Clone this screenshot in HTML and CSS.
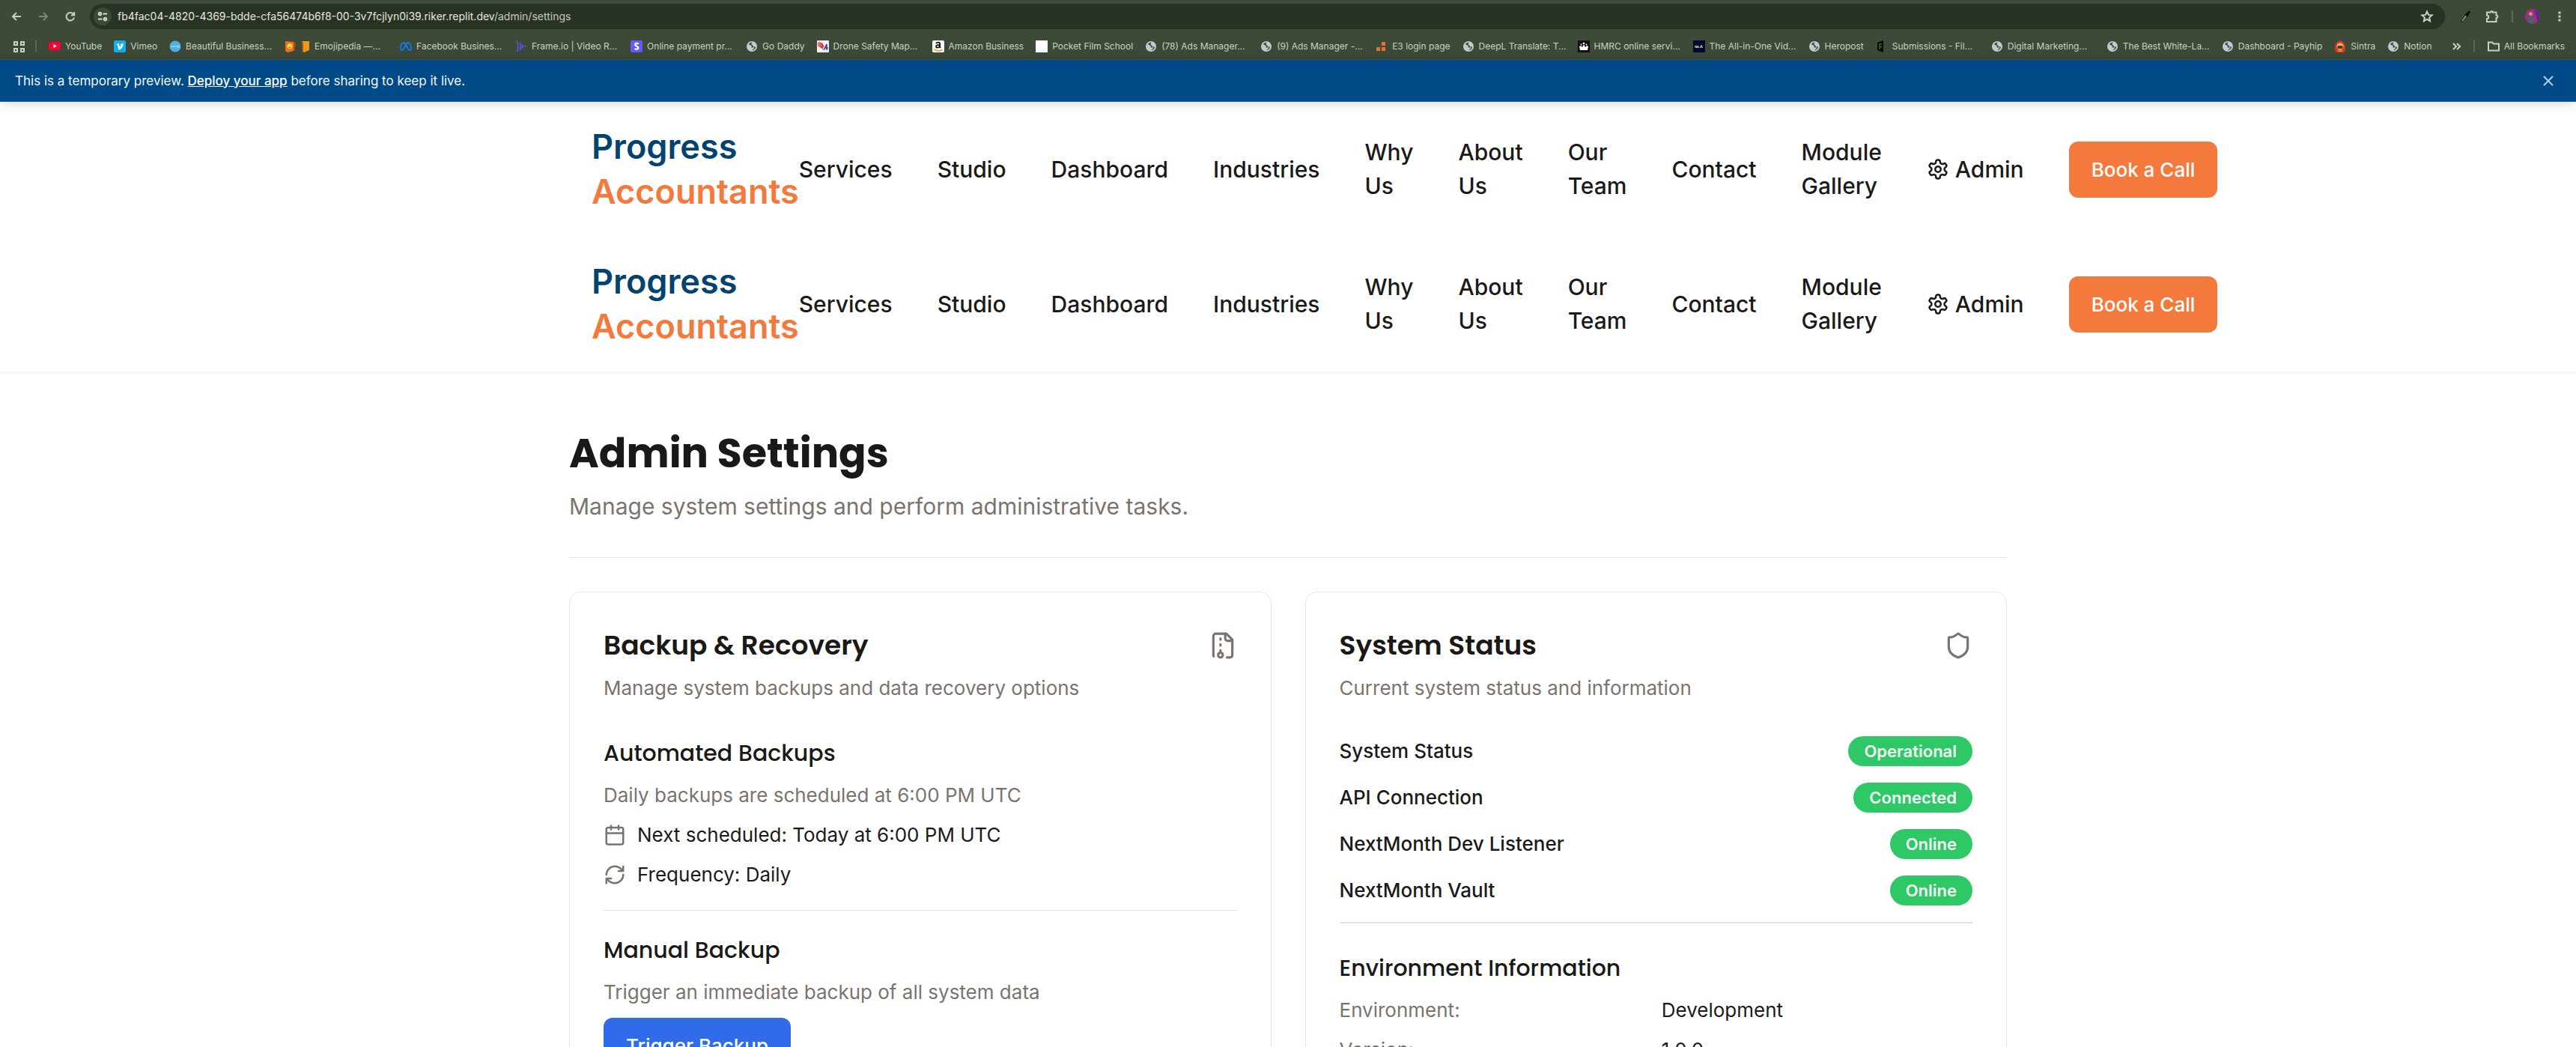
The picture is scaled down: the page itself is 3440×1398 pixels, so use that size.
FILE: index.html
```html
<!DOCTYPE html>
<html lang="en">
<head>
<meta charset="utf-8">
<title>Admin Settings</title>
<link rel="stylesheet" href="styles.css">
</head>
<body>
<svg class="sprite" aria-hidden="true">
  <symbol id="globe" viewBox="0 0 16 16"><circle cx="8" cy="8" r="7" fill="#c3cad0"/><path d="M8.500 2.500c-2 .3-3.500 1-4.500 2.500 1 1.500 2.500 1.200 3.500 2 .8 1-.5 1.800.5 2.500 1.300.6 2.200-1 3-.5 0 2-1.500 3.500-3.500 4.200 3.500-.2 5.500-2.500 5.500-5-1.500.5-3 .3-3.500-.8 0-1.500-1.500-1.200-2-2.200 0-1.200 1-1.500 1-2.700z" fill="#3e4a38"/></symbol>
  <symbol id="gear" viewBox="0 0 24 24"><path d="M12.220 2h-.44a2 2 0 0 0-2 2v.18a2 2 0 0 1-1 1.730l-.43.25a2 2 0 0 1-2 0l-.15-.08a2 2 0 0 0-2.730.73l-.22.38a2 2 0 0 0 .73 2.730l.15.1a2 2 0 0 1 1 1.720v.51a2 2 0 0 1-1 1.740l-.15.09a2 2 0 0 0-.73 2.730l.22.38a2 2 0 0 0 2.730.73l.15-.08a2 2 0 0 1 2 0l.43.25a2 2 0 0 1 1 1.730V20a2 2 0 0 0 2 2h.44a2 2 0 0 0 2-2v-.18a2 2 0 0 1 1-1.730l.43-.25a2 2 0 0 1 2 0l.15.08a2 2 0 0 0 2.730-.73l.22-.39a2 2 0 0 0-.73-2.730l-.15-.08a2 2 0 0 1-1-1.740v-.5a2 2 0 0 1 1-1.740l.15-.09a2 2 0 0 0 .73-2.730l-.22-.38a2 2 0 0 0-2.730-.73l-.15.08a2 2 0 0 1-2 0l-.43-.25a2 2 0 0 1-1-1.730V4a2 2 0 0 0-2-2z"/><circle cx="12" cy="12" r="3"/></symbol>
</svg>

<div class="chrome">
  <div class="toolbar">
    <button class="tool" aria-label="Back"><svg viewBox="0 0 20 20"><path d="M16 10H5M10 5l-5 5 5 5"/></svg></button>
    <button class="tool dim" aria-label="Forward"><svg viewBox="0 0 20 20"><path d="M4 10h11M10 5l5 5-5 5"/></svg></button>
    <button class="tool" aria-label="Reload"><svg viewBox="0 0 20 20"><path d="M15 11.500a5.300 5.300 0 1 1-1.500-5.200L15 8M15.200 4v4.200H11"/></svg></button>
    <div class="omnibox">
      <button class="site" aria-label="Site information"><svg viewBox="0 0 16 16"><circle cx="4.500" cy="4.500" r="1.700"/><path d="M8.500 4.500H14M2 11.500h5.500"/><circle cx="11.500" cy="11.500" r="1.700"/></svg></button>
      <span class="url">fb4fac04-4820-4369-bdde-cfa56474b6f8-00-3v7fcjlyn0i39.riker.replit.dev<span class="path">/admin/settings</span></span>
      <button class="star" aria-label="Bookmark this page"><svg viewBox="0 0 20 20"><path d="M10 3.500l2 4.400 4.600.4-3.500 3.200 1 4.700L10 13.700l-4.100 2.500 1-4.700-3.500-3.200 4.600-.4z"/></svg></button>
    </div>
    <div class="tools-right">
      <button class="tool" aria-label="Colour picker"><svg viewBox="0 0 20 20"><path d="M5 17l7-9" stroke="#16210f" stroke-width="3"/><path d="M6 16l6-8" stroke="#7fb58c" stroke-width="1.500"/><path d="M12 8l4-5M10.500 6.500l3.500 3" stroke="#0c120b" stroke-width="3"/></svg></button>
      <button class="tool" aria-label="Extensions"><svg viewBox="0 0 20 20"><path d="M3 4.500h5a1.500 1.500 0 0 1 3 0h4.500v4a1.500 1.500 0 0 1 0 3.500v5H3v-4a2.200 2.200 0 0 0 0-4.500z"/></svg></button>
      <span class="bar"></span>
      <button class="avatar" aria-label="Profile"><svg viewBox="0 0 20 20"><circle cx="10" cy="10" r="10" fill="#a52a86"/><path d="M12 1a9.500 9.500 0 0 1 5 16z" fill="#5b2a86"/><path d="M3 17c0-6 1-8 4-8s6 3 6 10a10 10 0 0 1-10-2z" fill="#565a6b"/><circle cx="7.500" cy="6.500" r="2.500" fill="#c98f78"/></svg></button>
      <button class="tool" aria-label="Menu"><svg viewBox="0 0 20 20"><path d="M8.500 3.500h3v3h-3zM8.500 8.500h3v3h-3zM8.500 13.500h3v3h-3z" fill="#c3d3b9" stroke="none"/></svg></button>
    </div>
  </div>
  <nav class="bookmarks" aria-label="Bookmarks">
    <span class="bookmarks-start">
      <svg class="apps" viewBox="0 0 16 16"><path d="M2 2h4v4H2zM11 2h4v4h-4zM2 11h4v4H2zM11 11h4v4h-4z"/></svg>
      <span class="bar"></span>
    </span>
    <a href="#"><svg viewBox="0 0 16 16"><rect y="2" width="16" height="11" rx="3" fill="#f03"/><path d="M6.500 5v5L11 7.500z" fill="#fff"/></svg>YouTube</a>
    <a href="#"><svg viewBox="0 0 16 16"><rect width="16" height="16" rx="2" fill="#12aeef"/><path d="M3 6l2.500-2c2-.5 1.800 3.500 2.500 5 1-1 1.800-2.300.5-2.500C9.200 4 13 2.800 12.800 5.500 12.500 8 9 12.500 7.500 12.500 5.500 12.500 5.500 6 4.500 6z" fill="#fff"/></svg>Vimeo</a>
    <a href="#" class="cut"><svg viewBox="0 0 16 16"><circle cx="8" cy="8" r="7.500" fill="#54b0e2"/><path d="M3 7v2M5 7v2M3 8h2M7 7v2M9 7v2M11 7h2v2h-2z" stroke="#a9dbf5" fill="none"/></svg><span>Beautiful Business...</span></a>
    <a href="#" class="cut"><svg viewBox="0 0 16 16"><path d="M1 1l11 1v12l-8 2-3-2z" fill="#e8741e"/><path d="M12 2l3 1-1 10-2 1z" fill="#b0481a"/><circle cx="7" cy="7.500" r="3.500" fill="#ffd34d"/><path d="M5.500 8.500c1 1.500 2 1.500 3 0" stroke="#8a4a10" fill="none"/></svg><svg class="book" viewBox="0 0 12 16"><path d="M1 1h10v12l-7 3-3-2z" fill="#f09a1a"/><path d="M1 1l2 2v13l-2-2z" fill="#9a5a18"/></svg><span>Emojipedia —...</span></a>
    <a href="#" class="cut"><svg viewBox="0 0 16 16"><path d="M1 10C1 6 3 3 5 3s3 2.500 4 4.500S11 13 13 13s2-1.500 2-3c0-4-2-7-4-7S8 5 7 7.500 5 13 3 13s-2-1.500-2-3z" fill="none" stroke="#0a7cf2" stroke-width="1.800"/></svg><span>Facebook Busines...</span></a>
    <a href="#" class="cut"><svg viewBox="0 0 16 16"><path d="M2 1c2.500 4 2.500 10 0 14M6 3c2 3 2 7 0 10M10 5.500v5M13.500 7v2" fill="none" stroke="#5b53e8" stroke-width="1.800"/></svg><span>Frame.io | Video R...</span></a>
    <a href="#" class="cut"><svg viewBox="0 0 16 16"><rect width="16" height="16" rx="2" fill="#635bff"/><path d="M10.800 4.500C9 3.500 6 3.500 6 5.500c0 2.500 4.500 2 4.500 4.500 0 2-3 2.200-5 1" fill="none" stroke="#fff" stroke-width="2.200"/></svg><span>Online payment pr...</span></a>
    <a href="#"><svg><use href="#globe"/></svg>Go Daddy</a>
    <a href="#" class="cut"><svg viewBox="0 0 16 16"><rect width="16" height="16" rx="1" fill="#f3f3f3"/><path d="M1 3l7 7M3 2l6 7M1 6l7 5M6 3l3 5" stroke="#d8333c" stroke-width="1.300"/><path d="M9 13l4-8v8M10 10h5" stroke="#2a4a88" stroke-width="1.500" fill="none"/></svg><span>Drone Safety Map...</span></a>
    <a href="#"><svg viewBox="0 0 16 16"><rect width="16" height="16" rx="2" fill="#fff"/><path d="M5 4c1-2 5.200-1.800 5.200.5V9l.8 1M10 5.800c-3 0-5 .5-5 2.200 0 2.500 4 2 5-.5" fill="none" stroke="#111" stroke-width="1.800"/><path d="M2 11.500c4 3.500 8 3 11.500.8" fill="none" stroke="#f90" stroke-width="1.500"/></svg>Amazon Business</a>
    <a href="#"><svg viewBox="0 0 16 16"><rect width="16" height="16" fill="#fff"/></svg>Pocket Film School</a>
    <a href="#" class="cut"><svg><use href="#globe"/></svg><span>(78) Ads Manager...</span></a>
    <a href="#" class="cut"><svg><use href="#globe"/></svg><span>(9) Ads Manager -...</span></a>
    <a href="#"><svg viewBox="0 0 16 16"><path d="M8 2h5v5H8zM1 9h5v5H1zM8 9h5v5H8z" fill="#e8702a"/></svg>E3 login page</a>
    <a href="#" class="cut"><svg><use href="#globe"/></svg><span>DeepL Translate: T...</span></a>
    <a href="#" class="cut"><svg viewBox="0 0 16 16"><rect width="16" height="16" fill="#111"/><path d="M3 13l-1-5 2-1 2 2 1.500-3h1L10 9l2-2 2 1-1 5z" fill="#fff"/><circle cx="8" cy="4" r="1.300" fill="#fff"/><circle cx="4.500" cy="5.500" r="1" fill="#fff"/><circle cx="11.500" cy="5.500" r="1" fill="#fff"/></svg><span>HMRC online servi...</span></a>
    <a href="#" class="cut"><svg viewBox="0 0 16 16"><rect width="16" height="16" fill="#020a2c"/><path d="M3 10V7l2 3V7l2 3V7M9 10l2-3.500 1.500 3.500M10 9h2" stroke="#e8c7c0" fill="none"/></svg><span>The All-in-One Vid...</span></a>
    <a href="#"><svg><use href="#globe"/></svg>Heropost</a>
    <a href="#" class="cut"><svg viewBox="0 0 16 16"><path d="M2 3l8-3v16l-8-3z" fill="#0a0a0a"/><path d="M5 12V5h3M5 8.500h3" stroke="#56604f" stroke-width="1.300" fill="none"/></svg><span>Submissions - Fil...</span></a>
    <a href="#" class="cut"><svg><use href="#globe"/></svg><span>Digital Marketing...</span></a>
    <a href="#" class="cut"><svg><use href="#globe"/></svg><span>The Best White-La...</span></a>
    <a href="#"><svg><use href="#globe"/></svg>Dashboard - Payhip</a>
    <a href="#"><svg viewBox="0 0 16 16"><path d="M8 0c5 2 7 6 7 10 0 3-1 6-3 6H4c-2 0-3-3-3-6C1 6 3 2 8 0z" fill="#d8392a"/><circle cx="8" cy="8" r="4.500" fill="#f2c25a"/><rect x="4.500" y="7" width="7" height="4" rx="1" fill="#5a3328"/><path d="M5 14h6" stroke="#f28a2a" stroke-width="2"/></svg>Sintra</a>
    <a href="#"><svg><use href="#globe"/></svg>Notion</a>
    <span class="bookmarks-end">
      <button class="more" aria-label="More bookmarks"><svg viewBox="0 0 16 16"><path d="M6 4l4 4-4 4M11 4l4 4-4 4"/></svg></button>
      <span class="bar"></span>
      <a href="#"><svg class="folder" viewBox="0 0 16 16"><path d="M1 13.500v-11h5l2 2h7v9z"/></svg>All Bookmarks</a>
    </span>
  </nav>
</div>

<div class="banner">
  <p>This is a temporary preview. <a href="#">Deploy your app</a> before sharing to keep it live.</p>
  <button aria-label="Dismiss"><svg viewBox="0 0 14 14"><path d="M1 1l12 12M13 1L1 13"/></svg></button>
</div>

<header class="site-header">
  <div class="navbar">
    <a class="logo" href="#">Progress <span>Accountants</span></a>
    <nav class="menu" aria-label="Primary">
      <a href="#">Services</a><a href="#">Studio</a><a href="#">Dashboard</a><a href="#">Industries</a><a href="#">Why Us</a><a href="#">About Us</a><a href="#">Our Team</a><a href="#">Contact</a><a href="#">Module Gallery</a>
      <a class="admin" href="#"><svg><use href="#gear"/></svg>Admin</a>
      <button class="btn btn-call">Book a Call</button>
    </nav>
  </div>
  <div class="navbar">
    <a class="logo" href="#">Progress <span>Accountants</span></a>
    <nav class="menu" aria-label="Secondary">
      <a href="#">Services</a><a href="#">Studio</a><a href="#">Dashboard</a><a href="#">Industries</a><a href="#">Why Us</a><a href="#">About Us</a><a href="#">Our Team</a><a href="#">Contact</a><a href="#">Module Gallery</a>
      <a class="admin" href="#"><svg><use href="#gear"/></svg>Admin</a>
      <button class="btn btn-call">Book a Call</button>
    </nav>
  </div>
</header>

<main class="page">
  <h1>Admin Settings</h1>
  <p class="lead">Manage system settings and perform administrative tasks.</p>
  <hr class="rule">
  <div class="cards">
    <section class="card">
      <div class="card-head">
        <h2>Backup &amp; Recovery</h2>
        <svg viewBox="0 0 24 24"><path d="M10 12v-1M10 18v-2M10 7V6M14 2v4a2 2 0 0 0 2 2h4"/><path d="M15.500 22H18a2 2 0 0 0 2-2V7l-5-5H6a2 2 0 0 0-2 2v16a2 2 0 0 0 .274 1.010"/><circle cx="10" cy="20" r="2"/></svg>
      </div>
      <p class="muted">Manage system backups and data recovery options</p>
      <div class="group first">
        <h3>Automated Backups</h3>
        <p class="muted">Daily backups are scheduled at 6:00 PM UTC</p>
        <p class="fact"><svg viewBox="0 0 24 24"><path d="M8 2v4M16 2v4M3 10h18"/><rect x="3" y="4" width="18" height="18" rx="2"/></svg>Next scheduled: Today at 6:00 PM UTC</p>
        <p class="fact"><svg viewBox="0 0 24 24"><path d="M3 12a9 9 0 0 1 9-9 9.750 9.750 0 0 1 6.740 2.740L21 8M21 3v5h-5M21 12a9 9 0 0 1-9 9 9.750 9.750 0 0 1-6.740-2.740L3 16M8 16H3v5"/></svg>Frequency: Daily</p>
      </div>
      <hr class="rule inner">
      <div class="group">
        <h3>Manual Backup</h3>
        <p class="muted">Trigger an immediate backup of all system data</p>
        <button class="btn btn-primary">Trigger Backup</button>
      </div>
    </section>
    <section class="card">
      <div class="card-head">
        <h2>System Status</h2>
        <svg viewBox="0 0 24 24"><path d="M20 13c0 5-3.500 7.500-7.660 8.950a1 1 0 0 1-.67-.01C7.500 20.500 4 18 4 13V6a1 1 0 0 1 1-1c2 0 4.500-1.200 6.240-2.720a1.170 1.170 0 0 1 1.520 0C14.510 3.810 17 5 19 5a1 1 0 0 1 1 1z"/></svg>
      </div>
      <p class="muted">Current system status and information</p>
      <ul class="statuses">
        <li>System Status<span class="badge">Operational</span></li>
        <li>API Connection<span class="badge">Connected</span></li>
        <li>NextMonth Dev Listener<span class="badge">Online</span></li>
        <li>NextMonth Vault<span class="badge">Online</span></li>
      </ul>
      <div class="env">
        <h3>Environment Information</h3>
        <dl>
          <dt>Environment:</dt><dd>Development</dd>
          <dt>Version:</dt><dd>1.0.0</dd>
        </dl>
      </div>
    </section>
  </div>
</main>
</body>
</html>
```

FILE: styles.css
```css
* { box-sizing: border-box; }
html { background: #fff; }
body {
  margin: 0;
  height: 100vh;
  overflow: hidden;
  font-family: Inter, "Liberation Sans", sans-serif;
  font-size: 26px;
  line-height: 38px;
  color: #1a1a1a;
}
h1, h2, h3, p, ul, dl, dd { margin: 0; padding: 0; font-weight: 400; }
h1, h2, h3 { font-family: Poppins, Inter, sans-serif; color: #1a1917; }
a { color: inherit; text-decoration: none; }
button { font: inherit; color: inherit; background: none; border: 0; padding: 0; }
svg { display: block; flex: none; }
.sprite { position: absolute; width: 0; height: 0; }

/* browser chrome */
.chrome { background: #3e4a38; border-bottom: 1px solid #4b5644; color: #c9d1c3; }
.toolbar { display: flex; align-items: center; height: 44px; padding-left: 12px; }
.tool { width: 20px; height: 20px; margin-right: 16px; }
.tool svg { width: 20px; height: 20px; fill: none; stroke: #c3d3b9; stroke-width: 2; }
.tool.dim svg { stroke: #7b8a72; }
.omnibox {
  flex: 1; display: flex; align-items: center; height: 34px;
  padding: 0 14px 0 5px; border-radius: 17px; background: #293325;
}
.site { width: 24px; height: 24px; padding: 4px; border-radius: 12px; background: #3e4a38; }
.site svg { fill: none; stroke: #d5dfce; stroke-width: 2; }
.url { flex: 1; margin-left: 8px; font-size: 14px; line-height: 20px; color: #e3e9df; }
.path { color: #c3ccbc; }
.star svg { width: 20px; height: 20px; fill: none; stroke: #c9d1c3; stroke-width: 2; }
.tools-right { display: flex; align-items: center; padding-left: 17px; }
.tools-right .tool:last-child { margin-right: 12px; }
.avatar { width: 20px; height: 20px; margin: 0 16px; }
.bar { width: 2px; height: 16px; background: #5a6752; }

.bookmarks {
  display: flex; align-items: center; gap: 16px; height: 35px; padding: 0 15px 0 17px;
  font-size: 12px; line-height: 16px; white-space: nowrap;
}
.bookmarks a { display: flex; align-items: center; gap: 6px; }
.bookmarks svg { width: 16px; height: 16px; }
.bookmarks .book { width: 12px; }
.cut { width: 138px; }
.apps, .more svg, .folder { fill: none; stroke: #c9d1c3; stroke-width: 2; }
.bookmarks-start { display: flex; align-items: center; gap: 14px; }
.bookmarks-end { display: flex; align-items: center; gap: 17px; margin-left: auto; }

/* preview notice */
.banner {
  display: flex; align-items: center; justify-content: space-between; position: relative;
  height: 56px; padding: 0 30px 0 20px; background: #004b87; border-bottom: 1px solid #1560a0;
  box-shadow: 0 0 16px rgba(0, 0, 0, .2);
  font-size: 17px; line-height: 24px; color: #f2f7fc;
}
.banner a { font-weight: 500; color: #fff; text-decoration: underline; }
.banner svg { width: 14px; height: 14px; stroke: #b9d0e4; stroke-width: 2; }

/* site header */
.site-header { border-bottom: 2px solid #f5f5f5; }
.navbar {
  display: flex; align-items: center; justify-content: space-between;
  max-width: 1920px; height: 180px; margin: 0 auto; padding: 0 30px;
}
.logo { font-size: 45px; line-height: 60px; font-weight: 600; color: #034371; }
.logo span { color: #f4793d; }
.menu { display: flex; align-items: center; gap: 60px; font-size: 30px; line-height: 45px; font-weight: 500; }
.admin { display: flex; align-items: center; gap: 8px; }
.admin svg { width: 30px; height: 30px; fill: none; stroke: currentColor; stroke-width: 2; }
.btn { height: 75px; padding: 0 30px; border-radius: 12px; font-weight: 500; color: #fff; white-space: nowrap; }
.btn-call { font-size: 26px; background: #f4793d; }
.btn-primary { align-self: flex-start; background: #306bea; }

/* settings page */
.page { max-width: 1920px; margin: 0 auto; padding-top: 74px; }
h1 { font-size: 54px; line-height: 67px; font-weight: 700; }
.lead { margin-top: 15px; font-size: 30px; line-height: 45px; color: #7b736e; }
.rule { height: 1px; margin: 45px 0; border: 0; background: #e3e3e3; }
.rule.inner { margin: 30px 0; }
.cards { display: grid; grid-template-columns: 1fr 1fr; gap: 45px; }
.card { min-height: 720px; padding: 45px; border: 1px solid #e5e5e5; border-radius: 15px; }
.card-head { display: flex; align-items: center; justify-content: space-between; margin-bottom: 12px; }
.card-head svg, .fact svg { width: 38px; height: 38px; fill: none; stroke: #7b736e; stroke-width: 2; stroke-linecap: round; stroke-linejoin: round; }
h2 { font-size: 36px; line-height: 52px; font-weight: 600; }
h3 { font-size: 30px; line-height: 45px; font-weight: 500; }
.muted, dt { color: #7b736e; }
.group { display: flex; flex-direction: column; gap: 15px; }
.group.first { margin-top: 45px; }
.group.first + .inner { margin-top: 28px; }
.fact { display: flex; align-items: center; gap: 15px; }
.fact svg { width: 30px; height: 30px; }
.statuses { display: flex; flex-direction: column; gap: 22px; margin-top: 45px; list-style: none; }
.statuses li { display: flex; align-items: center; justify-content: space-between; height: 40px; font-weight: 500; }
.badge { padding: 0 21px; border-radius: 20px; font-size: 22px; line-height: 40px; font-weight: 600; color: #f4fbf6; background: #2ec866; }
.env { margin-top: 22px; padding-top: 37px; border-top: 2px solid #e3e3e3; }
dl { display: grid; grid-template-columns: 1fr 1fr; gap: 15px; margin-top: 15px; }
```
